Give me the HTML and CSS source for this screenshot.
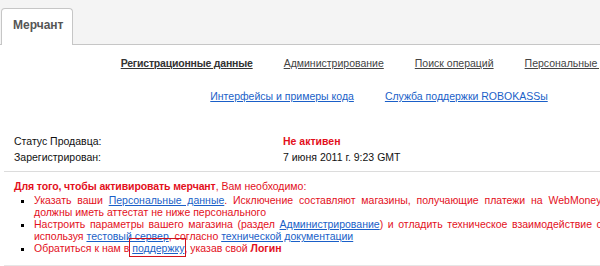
FILE: index.html
```html
<!DOCTYPE html>
<html>
<head>
<meta charset="utf-8">
<link rel="stylesheet" href="styles.css">
</head>
<body>
<div class="tabs">
  <div class="tab">Мерчант</div>
</div>
<div class="page">
  <div class="nav nav-main">
    <a class="nav-link current">Регистрационные данные</a>
    <a class="nav-link">Администрирование</a>
    <a class="nav-link">Поиск операций</a>
    <a class="nav-link">Персональные данные</a>
  </div>
  <div class="nav nav-sub">
    <a class="link">Интерфейсы и примеры кода</a>
    <a class="link">Служба поддержки ROBOKASSы</a>
  </div>
  <div class="status">
    <div class="label">Статус Продавца:</div>
    <div class="value red bold">Не активен</div>
    <div class="label">Зарегистрирован:</div>
    <div class="value">7 июня 2011 г. 9:23 GMT</div>
  </div>
  <div class="notice">
    <div class="notice-title"><b class="tight">Для того, чтобы активировать мерчант</b>, Вам необходимо:</div>
    <ul class="steps">
      <li>Указать ваши <a class="link">Персональные данные</a>. Исключение составляют магазины, получающие платежи на WebMoney кошельки, они должны иметь аттестат не ниже персонального</li>
      <li>Настроить параметры вашего магазина (раздел <a class="link">Администрирование</a>) и отладить техническое взаимодействие с ROBOKASSой, используя <a class="link">тестовый сервер</a>, согласно <a class="link">технической документации</a></li>
      <li>Обратиться к нам в <a class="link boxed">поддержку</a>, указав свой <b>Логин</b></li>
    </ul>
  </div>
</div>
</body>
</html>
```
FILE: styles.css
```css
html, body {
  margin: 0;
  padding: 0;
  background: #fff;
  overflow: hidden;
}
body {
  width: 600px;
  height: 266px;
  font-family: "Liberation Sans", Arial, sans-serif;
  font-size: 10.5px;
  color: #111;
}
.tabs {
  height: 36px;
  padding: 8px 0 0 1px;
  background: #f4f4f4;
  border-bottom: 1px solid #c6c6c6;
  display: flex;
  align-items: flex-end;
}
.tab {
  box-sizing: border-box;
  width: 72px;
  height: 37px;
  margin-bottom: -1px;
  background: #fff;
  border: 1px solid #c6c6c6;
  border-bottom: none;
  border-radius: 4px 4px 0 0;
  font-weight: bold;
  font-size: 12px;
  color: #555;
  padding: 9px 0 0 11px;
}
.page {
  width: 750px;
  margin-left: 4px;
}
.nav {
  display: flex;
  justify-content: center;
  gap: 31px;
  white-space: nowrap;
}
.nav-main {
  padding-top: 12px;
  height: 21px;
}
.nav-link {
  color: #444;
  text-decoration: underline;
}
.nav-link.current {
  color: #333;
  font-weight: bold;
  letter-spacing: -0.2px;
}
.nav-sub {
  padding-top: 12px;
  height: 30px;
}
.link {
  color: #1a5fc8;
  text-decoration: underline;
}
.status {
  display: grid;
  grid-template-columns: 269px 1fr;
  padding: 13px 10px 6px;
  line-height: 16px;
  border-bottom: 1px solid #dcdcdc;
}
.red { color: #e3101c; }
.bold { font-weight: bold; }
.notice {
  color: #e3101c;
  padding: 8px 10px 11px;
  line-height: 12px;
  border-bottom: 3px solid #e6e6e6;
}
.tight {
  letter-spacing: -0.1px;
}
.steps {
  width: 646px;
  margin: 2px 0 0 0;
  padding-left: 20px;
  list-style: square;
  text-align: justify;
}
.steps li::marker {
  color: #000;
}
.boxed {
  position: relative;
}
.boxed::after {
  content: "";
  position: absolute;
  left: -3px;
  right: -2px;
  top: -4px;
  bottom: -3px;
  border: 1px solid #d0121c;
}
```
